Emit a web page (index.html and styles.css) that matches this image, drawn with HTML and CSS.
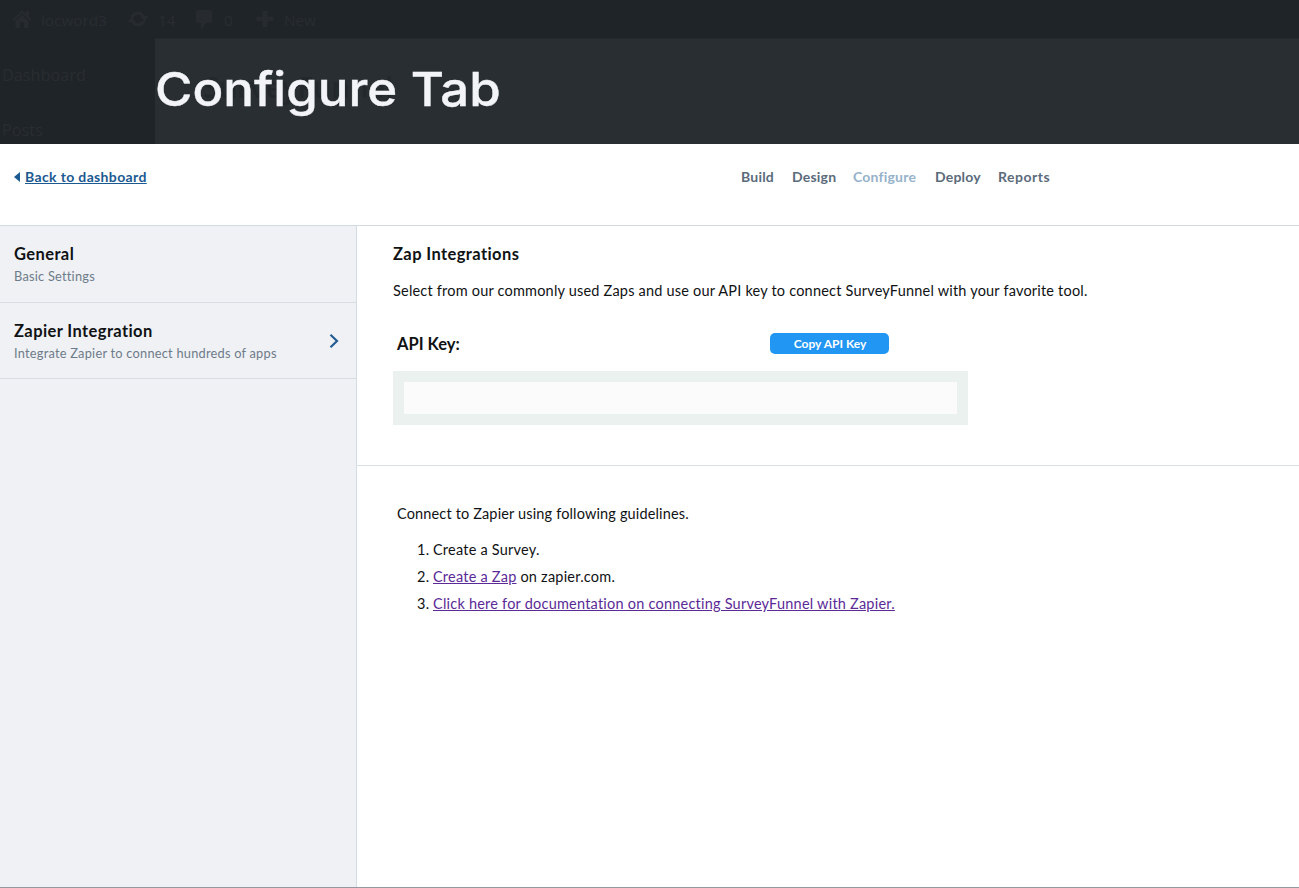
FILE: index.html
```html
<!DOCTYPE html>
<html lang="en">
<head>
<meta charset="utf-8">
<title>Configure Tab</title>
<link rel="stylesheet" href="styles.css">
</head>
<body>
<header class="banner">
  <div class="adminbar">
    <svg class="ico-home" width="20" height="20" viewBox="0 0 20 20"><path d="M10 1 L0.5 10.5 L2 12 L10 4 L18 12 L19.5 10.5 L17 8 V2 H14 V5 Z M3.5 12 L10 5.5 L16.500 12 V19 H12 V13 H8 V19 H3.500 Z"/></svg>
    <span class="site">locword3</span>
    <svg class="ico-update" width="22" height="20" viewBox="0 0 22 20"><path d="M3.500 9 A7.500 7.500 0 0 1 16.500 5 L18.500 7 H21.500 L17.500 12 L13 7.500 H14.800 A4.800 4.800 0 0 0 6.800 8.500 Z M18.500 11 A7.500 7.500 0 0 1 5.500 15 L3.500 13 H0.500 L4.500 8 L9 12.500 H7.200 A4.800 4.800 0 0 0 15.200 11.500 Z"/></svg>
    <span class="count">14</span>
    <svg class="ico-comment" width="18" height="20" viewBox="0 0 18 20"><path d="M3 0 H15 Q17 0 17 2 V11 Q17 13 15 13 H11 L6 20 V13 H3 Q1 13 1 11 V2 Q1 0 3 0 Z"/></svg>
    <span class="comments">0</span>
    <svg class="ico-plus" width="18" height="18" viewBox="0 0 18 18"><path d="M6.500 1 H11.500 V6.500 H17.500 V11 H11.500 V17 H6.500 V11 H0.500 V6.500 H6.500 Z"/></svg>
    <span class="new">New</span>
  </div>
  <div class="banner-body">
    <nav class="adminmenu"><span>Dashboard</span><span>Posts</span></nav>
    <div class="banner-main">
      <span class="ghost">SurveyFunnel</span>
      <h1 class="title">Configure Tab</h1>
    </div>
  </div>
</header>
<div class="topbar">
  <div class="back"><svg width="6" height="10" viewBox="0 0 6 10"><path d="M6 0 V10 L0 5 Z"/></svg><a>Back to dashboard</a></div>
  <nav class="tabs"><a class="t1">Build</a><a class="t2">Design</a><a class="t3 active">Configure</a><a class="t4">Deploy</a><a class="t5">Reports</a></nav>
</div>
<div class="layout">
  <aside class="side">
    <div class="item"><div><h3>General</h3><p>Basic Settings</p></div></div>
    <div class="item"><div><h3>Zapier Integration</h3><p>Integrate Zapier to connect hundreds of apps</p></div>
      <svg class="chev" width="10" height="16" viewBox="0 0 10 16"><path d="M1.500 1.800 L8 8 L1.500 14.200"/></svg></div>
  </aside>
  <main class="main">
    <section class="api">
      <h2 class="h">Zap Integrations</h2>
      <p class="desc">Select from our commonly used Zaps and use our API key to connect SurveyFunnel with your favorite tool.</p>
      <div class="keyrow"><span class="label">API Key:</span><button class="copy">Copy API Key</button></div>
      <div class="keybox"></div>
    </section>
    <section class="guide">
      <p class="intro">Connect to Zapier using following guidelines.</p>
      <div class="step"><span class="num">1.</span><span>Create a Survey.</span></div>
      <div class="step"><span class="num">2.</span><span class="s2"><a>Create a Zap</a> on zapier.com.</span></div>
      <div class="step"><span class="num">3.</span><a>Click here for documentation on connecting SurveyFunnel with Zapier.</a></div>
    </section>
  </main>
</div>
</body>
</html>
```
FILE: styles.css
```css
* { box-sizing: border-box; }
body { margin: 0; width: 1299px; height: 888px; overflow: hidden; display: flex; flex-direction: column; background: #fff; color: #101214; font-family: Lato, sans-serif; font-size: 14.5px; letter-spacing: .2px; font-variant-ligatures: none; border-bottom: 1px solid #9499a0; }
h1, h2, h3, p { margin: 0; }
span, a, p, h1, h2, h3 { white-space: nowrap; }
.banner { height: 144px; flex: none; background: #1f2428; font-family: "Open Sans", sans-serif; letter-spacing: 0; color: #292d31; }
.adminbar { height: 38px; display: flex; align-items: center; padding-left: 12px; font-size: 15.3px; }
.adminbar svg { fill: #272b2f; flex: none; }
.adminbar span { line-height: 38px; padding-top: 2px; flex: none; }
.site { width: 87px; padding-left: 9px; }
.ico-update { margin-left: 8px; }
.count { width: 46px; padding-left: 9px; }
.ico-comment { margin-left: 0; margin-top: 2px; }
.comments { width: 43px; padding-left: 11px; }
.ico-plus { margin-left: 0; }
.new { padding-left: 10px; }
.banner-body { height: 106px; display: flex; }
.adminmenu { width: 155px; padding: 25px 0 0 2px; display: flex; flex-direction: column; gap: 31px; font-size: 16.3px; line-height: 24px; }
.banner-main { flex: 1; background: #292e32; display: grid; justify-items: start; border-top: 1px solid #252a2e; }
.ghost { grid-area: 1 / 1; padding: 26px 0 0 48px; font: 600 29px/44px "Open Sans", sans-serif; color: #23282c; }
.title { grid-area: 1 / 1; margin-top: 21px; font: 500 47px/58px Inter, sans-serif; letter-spacing: 0; color: #f3f4f7; -webkit-text-stroke: .4px #f3f4f7; transform: scaleX(1.085); transform-origin: 0 0; }
.topbar { height: 82px; flex: none; border-bottom: 1px solid #d2dbe3; display: flex; padding: 22px 0 0 14px; line-height: 22px; font-weight: 700; font-size: 14px; }
.back { width: 727px; display: flex; align-items: center; height: 22px; gap: 5px; color: #1b5a90; letter-spacing: .36px; }
.back svg { fill: #1b5a90; }
.back a { text-decoration: underline; margin-top: -1px; }
.tabs { display: flex; color: #5b6b7b; }
.tabs .active { color: #96b2cb; }
.t1 { width: 51px; } .t2 { width: 61px; } .t3 { width: 82px; } .t4 { width: 63px; } .t5 { letter-spacing: .5px; }
.layout { flex: 1; display: flex; }
.side { width: 357px; background: #eff1f5; border-right: 1px solid #d2dce5; }
.item { height: 76.5px; border-bottom: 1px solid #d8dde4; padding: 16px 17px 0 14px; display: flex; justify-content: space-between; }
.item h3 { font-size: 16.5px; line-height: 24px; letter-spacing: .4px; }
.item p { font-size: 12.8px; line-height: 20px; letter-spacing: .23px; color: #6e7b89; }
.chev { margin-top: 14px; fill: none; stroke: #245d92; stroke-width: 2.2; }
.main { flex: 1; }
.api { height: 240px; border-bottom: 1px solid #d8e0e7; padding: 16px 0 0 36px; }
.h { font-size: 16.5px; line-height: 24px; letter-spacing: .4px; }
.desc { margin-top: 14px; line-height: 22px; }
.keyrow { margin-top: 31px; padding-left: 4px; height: 21px; width: 496px; display: flex; justify-content: space-between; align-items: center; }
.label { font-size: 16.5px; letter-spacing: 0; font-weight: 700; }
.copy { width: 119px; height: 21px; border: 0; border-radius: 5px; padding: 1px 0 0 1px; background: #2196f3; color: #fff; font: 700 12px/20px Lato, sans-serif; }
.keybox { margin-top: 17px; width: 575px; height: 54px; border: 11px solid #eaf1ef; background: #fbfbfb; }
.guide { padding: 37px 0 0 40px; line-height: 22px; }
.intro { margin-bottom: 11px; letter-spacing: .15px; }
.step { display: flex; height: 27px; line-height: 27px; letter-spacing: .22px; }
.num { width: 36px; padding-left: 20px; }
.step a { color: #5b2a97; text-decoration: underline; }
```
